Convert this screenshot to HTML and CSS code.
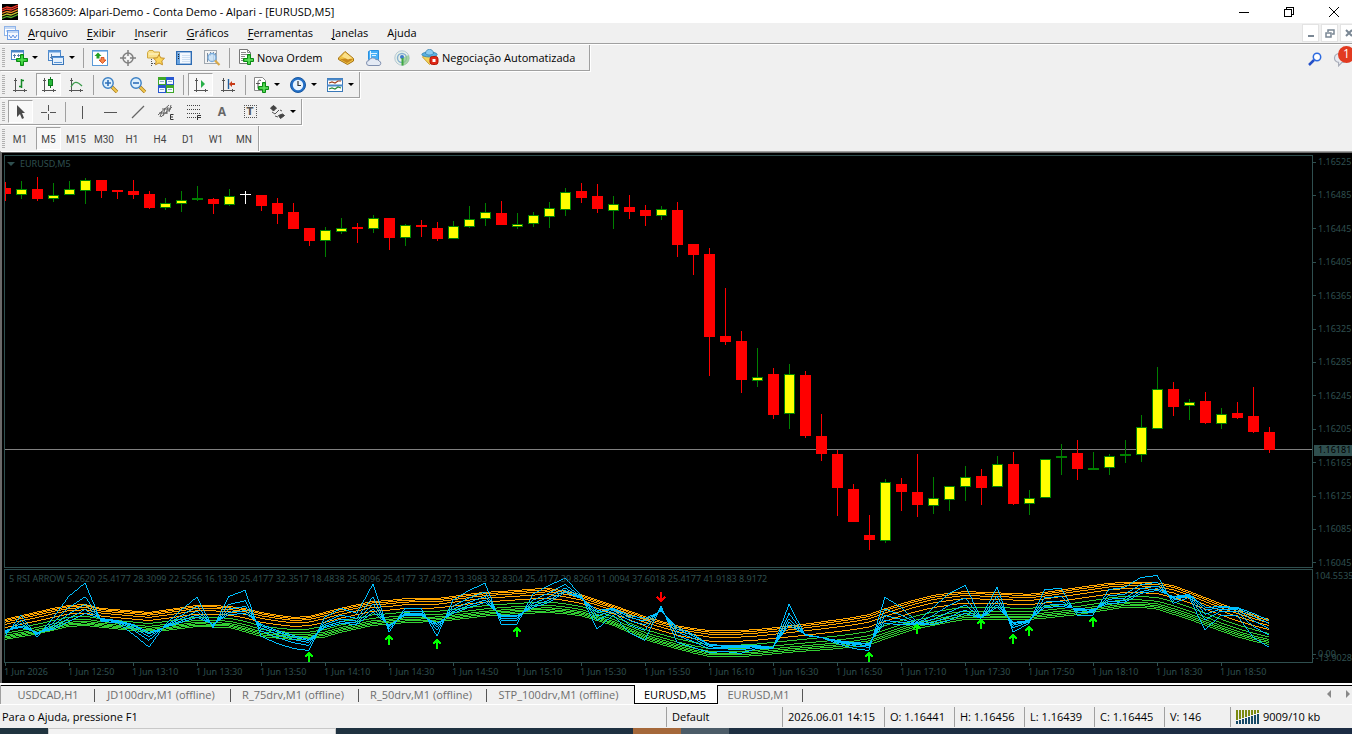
FILE: index.html
```html
<!DOCTYPE html>
<html lang="pt">
<head>
<meta charset="utf-8">
<title>16583609: Alpari-Demo - Conta Demo - Alpari - [EURUSD,M5]</title>
<link rel="stylesheet" href="styles.css">
</head>
<body>
<div class="app">
<header class="titlebar">
  <svg class="logo" viewBox="0 0 16 16"><rect width="16" height="16" fill="#000"/><g fill="none" stroke-width="1.3"><path stroke="#f03a2a" d="M0 5l5-2 4 1 7-3M0 7l5-2 4 1 7-3"/><path stroke="#f08a28" d="M0 9.500l5-2 4 1 7-3"/><path stroke="#c8c830" d="M0 12l5-2 4 1 7-3"/><path stroke="#58b030" d="M0 14.500l5-2 4 1 7-3"/></g></svg>
  <h1>16583609: Alpari-Demo - Conta Demo - Alpari - [EURUSD,M5]</h1>
  <div class="wincontrols">
    <button aria-label="Minimizar"><svg viewBox="0 0 12 12"><path d="M1 6.500h10" /></svg></button>
    <button aria-label="Restaurar"><svg viewBox="0 0 12 12"><path d="M1.500 3.500h7v7h-7zM3.500 3.500v-2h7v7h-2"/></svg></button>
    <button aria-label="Fechar"><svg viewBox="0 0 12 12"><path class="smooth" d="M1 1l10 10M11 1L1 11"/></svg></button>
  </div>
</header>
<nav class="menubar">
  <svg class="mdi-icon" viewBox="0 0 16 16"><rect x=".5" y="1.500" width="11" height="9" fill="#fff" stroke="#8fb4e8"/><path d="M1 3h10M2 6h3M7 6h3" stroke="#8fb4e8"/><rect x="3.500" y="5.500" width="11" height="9" fill="#f4f8ff" stroke="#6f9fe6"/><path d="M4 7h10" stroke="#8fb4e8"/><path d="M5 10l2 3 2-3 2 3 2-3" fill="none" stroke="#5f8fe0"/></svg>
  <button><u>A</u>rquivo</button><button><u>E</u>xibir</button><button><u>I</u>nserir</button><button><u>G</u>ráficos</button><button><u>F</u>erramentas</button><button><u>J</u>anelas</button><button>Ajuda</button>
  <div class="mdicontrols">
    <button aria-label="Minimizar gráfico"><svg viewBox="0 0 10 10"><path d="M2 8h6"/></svg></button>
    <button aria-label="Restaurar gráfico"><svg viewBox="0 0 10 10"><path d="M1 5h5v4h-5zM3 4v-2h6v4h-2" stroke-width="1.500"/></svg></button>
    <button aria-label="Fechar gráfico"><svg viewBox="0 0 10 10"><path d="M2 2l6 6M8 2L2 8"/></svg></button>
  </div>
</nav>
<section class="toolbars">
  <div class="row">
    <div class="bar">
      <i class="grip"></i>
      <button class="tool drop" aria-label="Novo gráfico"><svg viewBox="0 0 18 16"><rect x="1.500" y=".5" width="12" height="9" fill="#fff" stroke="#4a86c8"/><path d="M1 1.500h13" stroke="#4a86c8" stroke-width="2"/><path d="M4.500 4v4M3 5.500h3M8.500 4v3M7 5.500h3" stroke="#5a7ea8"/><path d="M10.500 4.500h3v4h4v3h-4v4h-3v-4h-4v-3h4z" fill="#28c028" stroke="#0a8a14"/><path d="M12 6v8M8 10h8" stroke="#5ce85c"/></svg></button>
      <button class="tool drop" aria-label="Perfis"><svg viewBox="0 0 18 16"><rect x="1.500" y=".5" width="12" height="10" fill="#eaf3fd" stroke="#4a86c8"/><path d="M1 1.500h13" stroke="#5a96d8" stroke-width="2"/><path d="M4.500 4v5M3 7.500h6" stroke="#5a7ea8"/><rect x="5.500" y="6.500" width="11" height="8" fill="#e4f0fc" stroke="#3a76b8"/><path d="M5 7.500h12M7 12.500h8" stroke="#5a96d8"/></svg></button>
      <i class="sep"></i>
      <button class="tool" aria-label="Observação do mercado"><svg viewBox="0 0 16 16"><rect x=".5" y=".5" width="15" height="15" fill="#fff" stroke="#5a9ad8"/><path d="M1 1.500h14" stroke="#9cc4f0"/><path d="M6 2.500L9.500 6H7.500v2.500h-3V6h-2z" fill="#22a022"/><path d="M10.500 13.500L7 10h2V7.500h3V10h2z" fill="#f88848" stroke="#d04010" stroke-width=".8"/></svg></button>
      <button class="tool" aria-label="Janela de dados"><svg viewBox="0 0 16 16"><circle cx="8" cy="8" r="5" fill="none" stroke="#808080" stroke-width="1.500"/><path d="M8 0v6M8 10v6M0 8h6M10 8h6" stroke="#808080" stroke-width="1.500"/><circle cx="8" cy="8" r="1" fill="#fff"/></svg></button>
      <button class="tool" aria-label="Navegador"><svg viewBox="0 0 18 16"><path d="M.5 2.500L2 .5h4l1 1.500h5.500v6h-12z" fill="#f9e08a" stroke="#d0a840"/><path d="M2 4h10" stroke="#fff6cc"/><path d="M4.500 9v7M5 13.500h3" stroke="#555" stroke-dasharray="1 1"/><path d="M12 4.500l1.700 3.300 3.800.5-2.700 2.600.7 3.900-3.500-1.800-3.500 1.800.7-3.900-2.700-2.600 3.800-.5z" fill="#fbd65a" stroke="#c8922a"/></svg></button>
      <button class="tool" aria-label="Terminal"><svg viewBox="0 0 16 16"><rect x=".7" y="1.700" width="14.600" height="12.600" fill="#f4f9ff" stroke="#2d6cb4" stroke-width="1.400"/><path d="M2.500 3v11" stroke="#6aa4e0" stroke-width="3"/><path d="M2 4.500h1M2 6.500h1M2 8.500h1" stroke="#222"/><path d="M6 5.500h8M6 7.500h8M6 9.500h8M6 11.500h8" stroke="#cfe0f2"/></svg></button>
      <button class="tool" aria-label="Testador de estratégia"><svg viewBox="0 0 16 16"><rect x=".5" y=".5" width="12" height="13" fill="#f4f4f4" stroke="#a0a8b0"/><path d="M3.500 3v9M6.500 2v4M9.500 2v9M11.500 3v6" stroke="#7c8c9c"/><circle cx="8" cy="7.500" r="4" fill="#c4e0f8" fill-opacity=".8" stroke="#7aacdc" stroke-width="1.300"/><path d="M11 10.500l4.500 4.500" stroke="#d8a848" stroke-width="2.200"/></svg></button>
      <i class="sep"></i>
      <button class="tool order"><svg viewBox="0 0 16 16"><path d="M1.500.5h8l3 3v11h-11z" fill="#fff" stroke="#777"/><path d="M9.500.5v3h3M3 3.500h5M3 5.500h7M3 7.500h4M3 9.500h3M3 11.500h3" fill="none" stroke="#888"/><path d="M9.500 5.500h3v4h3v3h-3v3h-3v-3h-4v-3h4z" fill="#30c030" stroke="#0a8a14"/><path d="M11 7v8M7 11h8" stroke="#70e870"/></svg>Nova Ordem</button>
      <button class="tool" aria-label="MetaEditor"><svg viewBox="0 0 16 16"><path d="M7 1.500l8.500 7v2.500l-6 3.500L.5 9.500V8z" fill="#f0c448" stroke="#a87414"/><path d="M1 8.500L9 13l6-3.500-5.500-1.500L4 9z" fill="#c8881c"/><path d="M7 2.500L14 8l-4 1.500-6-3z" fill="#fbe08a"/></svg></button>
      <button class="tool" aria-label="VPS"><svg viewBox="0 0 18 16"><path d="M3.500 1.500l2-1h8v9h-10z" fill="#48b0f8" stroke="#2890e0"/><path d="M6 3.500h6M7 5.500h4M5.500 1v8" stroke="#e0f4ff"/><path d="M4 15.500a2.500 2.500 0 010-5 4 4 0 017-1 3 3 0 013 1.500 2.300 2.300 0 010 4.500z" fill="#e4eaf4" stroke="#8090b0"/></svg></button>
      <button class="tool" aria-label="Sinais"><svg viewBox="0 0 16 16"><circle cx="8" cy="8" r="7.200" fill="#e8f0e8" stroke="#b4c8d4"/><circle cx="8" cy="8" r="4.500" fill="none" stroke="#88b0d0" stroke-width="1.400"/><path d="M8 8l6.500-3A7.200 7.200 0 018 15.500z" fill="#8cc888" opacity=".7"/><circle cx="8" cy="7" r="2" fill="#3d78c8"/><path d="M8.500 8v7.500" stroke="#3fa840" stroke-width="2"/></svg></button>
      <button class="tool auto"><svg viewBox="0 0 17 16"><path d="M1 8l7 7.500L15 8l-2-2H3z" fill="#f4d458" stroke="#c8a030"/><ellipse cx="8" cy="5.500" rx="7.700" ry="2.500" fill="#5ab0e0" stroke="#2878a8" stroke-width=".7"/><path d="M4 4.500c0-5.500 8-5.500 8 0-2 2-6 2-8 0z" fill="#8cccf0" stroke="#2878a8" stroke-width=".7"/><rect x="8.500" y="7.500" width="8" height="8" rx="2.500" fill="#e02818" stroke="#b01808"/><rect x="11" y="10" width="3" height="3" fill="#fff"/></svg>Negociação Automatizada</button>
    </div>
    <div class="rightside">
      <button class="icon" aria-label="Pesquisar"><svg viewBox="0 0 14 14"><circle cx="9" cy="5" r="3.700" fill="#fff" stroke="#2c6ae0" stroke-width="1.500"/><path d="M6 8l-5 5" stroke="#2450c8" stroke-width="2.500"/></svg></button>
      <button class="icon chat" aria-label="Mensagens"><svg viewBox="0 0 16 14"><path d="M5 13v-3C0 9 0 2 7 2s8 8 1 8z" fill="#e8eaf0" stroke="#a8acb8"/></svg><span class="badge">1</span></button>
    </div>
  </div>
  <div class="bar">
    <i class="grip"></i>
    <button class="tool" aria-label="Barras"><svg viewBox="0 0 16 16"><path class="ax" d="M3.500 1v14M1 13.500h14M2 3.500h3M12.500 12v3"/><path d="M9.500 2v9M7 9.500h2M10 3.500h2" stroke="#168a28" stroke-width="1.500"/></svg></button>
    <button class="tool on" aria-label="Velas"><svg viewBox="0 0 16 16"><path class="ax" d="M3.500 1v14M1 13.500h14M2 3.500h3M12.500 12v3"/><path d="M9.500 0v11" stroke="#0c7a1c"/><rect x="7.500" y="2.500" width="4" height="6" fill="#28b83c" stroke="#0c7a1c"/></svg></button>
    <button class="tool" aria-label="Linha"><svg viewBox="0 0 16 16"><path class="ax" d="M3.500 1v14M1 13.500h14M2 3.500h3M12.500 12v3"/><path d="M3 10c3-6 6-6 11-1" fill="none" stroke="#3a9a4a" stroke-width="1.300"/></svg></button>
    <i class="sep"></i>
    <button class="tool" aria-label="Ampliar"><svg viewBox="0 0 16 16"><path d="M10 10l5 5" stroke="#a87818" stroke-width="3.400"/><path d="M10 10l5 5" stroke="#f0c850" stroke-width="2"/><circle cx="6" cy="6" r="5.200" fill="#dff0fc" stroke="#3c80c4" stroke-width="1.400"/><path d="M3 6h6M6 3v6" stroke="#3070b8" stroke-width="1.600"/></svg></button>
    <button class="tool" aria-label="Reduzir"><svg viewBox="0 0 16 16"><path d="M10 10l5 5" stroke="#a87818" stroke-width="3.400"/><path d="M10 10l5 5" stroke="#f0c850" stroke-width="2"/><circle cx="6" cy="6" r="5.200" fill="#dff0fc" stroke="#3c80c4" stroke-width="1.400"/><path d="M3 6h6" stroke="#3070b8" stroke-width="1.600"/></svg></button>
    <button class="tool" aria-label="Lado a lado"><svg viewBox="0 0 16 16"><path d="M0 0h8v8H0zM8 8h8v8H8z" fill="#3fa828"/><path d="M8 0h8v8H8zM0 8h8v8H0z" fill="#2858d0"/><path d="M1 3h6v4H1zM9 3h6v4H9zM1 11h6v4H1zM9 11h6v4H9z" fill="#f4f9ff"/><path d="M2 4.500h4M10 4.500h4M2 12.500h4M10 12.500h4" stroke="#90b0c8"/></svg></button>
    <i class="sep"></i>
    <button class="tool on" aria-label="Rolagem automática"><svg viewBox="0 0 16 16"><path class="ax" d="M3.500 1v14M1 13.500h14M2 3.500h3M12.500 12v3"/><path d="M8 3l4 4-4 4z" fill="#28b048"/></svg></button>
    <button class="tool" aria-label="Deslocar gráfico"><svg viewBox="0 0 16 16"><path class="ax" d="M3.500 1v14M1 13.500h14M2 3.500h3M12.500 12v3"/><path d="M8.500 2v10" stroke="#2060a0" stroke-width="1.400"/><path d="M9 7l3-3v2h3v2h-3v2z" fill="#c83c18"/></svg></button>
    <i class="sep"></i>
    <button class="tool drop" aria-label="Indicadores"><svg viewBox="0 0 16 16"><path d="M1.500.5h8l3 3v10h-11z" fill="#fff" stroke="#888"/><path d="M8 3.500c-2-1-3 0-3 2v6M3 6.500h4" fill="none" stroke="#555"/><path d="M9.500 5.500h3v4h3v3h-3v3h-3v-3h-4v-3h4z" fill="#30c030" stroke="#0a8a14"/><path d="M11 7v8M7 11h8" stroke="#70e870"/></svg></button>
    <button class="tool drop" aria-label="Períodos"><svg viewBox="0 0 16 16"><circle cx="8" cy="8" r="7.500" fill="#2470c8" stroke="#1858a0"/><circle cx="8" cy="8" r="5.200" fill="#e8f4ff"/><path d="M8 4v4.500h3" fill="none" stroke="#333" stroke-width="1.200"/></svg></button>
    <button class="tool drop" aria-label="Modelos"><svg viewBox="0 0 16 16"><rect x=".5" y="1.500" width="15" height="13" fill="#fff" stroke="#3a78b8"/><path d="M0 2.500h16M0 8.500h16" stroke="#4a88c8" stroke-width="1.800"/><path d="M2 6l3-1 3 1 3-2h3" fill="none" stroke="#a04020" stroke-width="1.200"/><path d="M2 12l3-1 3 1 3-2 3 1" fill="none" stroke="#2a8a38" stroke-width="1.200"/></svg></button>
  </div>
  <div class="bar">
    <i class="grip"></i>
    <button class="tool on" aria-label="Cursor"><svg viewBox="0 0 16 16"><path d="M4 1l8 8H9l2 5-2 1-2-5-3 3z" fill="#4a4a4a"/></svg></button>
    <button class="tool" aria-label="Mira"><svg viewBox="0 0 16 16"><path class="ax" d="M8.500 1v6M8.500 10v6M1 8.500h6M10 8.500h6"/></svg></button>
    <i class="sep"></i>
    <button class="tool" aria-label="Linha vertical"><svg viewBox="0 0 16 16"><path class="ax" d="M8.500 2v13"/></svg></button>
    <button class="tool" aria-label="Linha horizontal"><svg viewBox="0 0 16 16"><path class="ax" d="M2 8.500h13"/></svg></button>
    <button class="tool" aria-label="Linha de tendência"><svg viewBox="0 0 16 16"><path d="M2 14L14 2" stroke="#666" stroke-width="1.300"/></svg></button>
    <button class="tool" aria-label="Canal"><svg viewBox="0 0 16 16"><path d="M0 11L11 1M3 13L14 3M4 7l-2 6M7 4l-2 8M10 3L8 10M13 1l-2 7M1 9h9M4 5h9" stroke="#666" fill="none"/><path d="M15.500 10.500h-3v5h3M13 13h2" fill="none" stroke="#333"/></svg></button>
    <button class="tool" aria-label="Fibonacci"><svg viewBox="0 0 16 16"><path d="M1 1.500h14M1 5.500h14M1 9.500h14M1 13.500h9" stroke="#444" stroke-dasharray="1 1"/><path d="M15 11.500h-3.500V16M12 13.500h3" fill="none" stroke="#333"/></svg></button>
    <button class="tool letter">A</button>
    <button class="tool boxed" aria-label="Etiqueta"><span>T</span></button>
    <button class="tool drop" aria-label="Setas"><svg viewBox="0 0 16 16"><path d="M4.500 1.500l3 2.500-3 3L1.500 4zM11.500 14.500l4-3-2-1.500-4 1.500z" fill="#444" stroke="#444"/><path d="M3 8l3 2 4-4M9 13l-3-1M11 6l2 1" stroke="#555" fill="none"/></svg></button>
  </div>
  <div class="bar last">
    <i class="grip"></i>
    <button class="tool">M1</button><button class="tool on">M5</button><button class="tool">M15</button><button class="tool">M30</button><button class="tool">H1</button><button class="tool">H4</button><button class="tool">D1</button><button class="tool">W1</button><button class="tool">MN</button>
  </div>
</section>
<main class="chart">
  <section class="panel price">
    <div class="caption symbol"><svg viewBox="0 0 8 4"><path d="M0 0h8L4 4z" fill="#2f4f4f"/></svg>EURUSD,M5</div>
    <svg id="candles" class="plot" viewBox="5 156 1307 411" preserveAspectRatio="none"></svg>
  </section>
  <div class="scale" id="prices"><span class="last-price">1.16181</span></div>
  <section class="panel">
    <div class="caption">5 RSI ARROW 5.2620 25.4177 28.3099 22.5256 16.1330 25.4177 32.3517 18.4838 25.8096 25.4177 37.4372 13.3983 32.8304 25.4177 39.8260 11.0094 37.6018 25.4177 41.9183 8.9172</div>
    <svg id="rsi" class="plot" viewBox="5 570 1307 92" preserveAspectRatio="none"></svg>
  </section>
  <div class="scale rsi-scale"><span>104.5535</span><span class="zero">0.00</span><span>-13.9028</span></div>
  <div class="times" id="times"></div>
</main>
<nav class="tabs">
  <button class="t1">USDCAD,H1</button><button class="t3">JD100drv,M1 (offline)</button><button class="t2">R_75drv,M1 (offline)</button><button class="t2">R_50drv,M1 (offline)</button><button class="t4">STP_100drv,M1 (offline)</button><button class="active">EURUSD,M5</button><button class="t0">EURUSD,M1</button>
  <div class="scroll"><button aria-label="Anterior"><svg viewBox="0 0 4 8"><path d="M4 0v8L0 4z"/></svg></button><button aria-label="Próximo"><svg viewBox="0 0 4 8"><path d="M0 0v8l4-4z"/></svg></button></div>
</nav>
<footer class="status">
  <span class="help">Para o Ajuda, pressione F1</span>
  <span class="profile">Default</span>
  <span class="date">2026.06.01 14:15</span>
  <span>O: 1.16441</span><span>H: 1.16456</span><span>L: 1.16439</span><span>C: 1.16445</span><span class="vol">V: 146</span>
  <span class="net"><svg viewBox="0 0 24 14"><path d="M1 0v10M4 0v9M7 0v8M10 0v7M13 0v6M16 0v5M19 0v4M22 0v3" stroke="#7a8a10" stroke-width="2"/><path d="M1 11v3M4 10v4M7 9v5M10 8v6M13 7v7M16 6v8M19 5v9M22 4v10" stroke="#164a68" stroke-width="2"/></svg>9009/10 kb</span>
</footer>
<div class="taskbar"><i class="search"></i><i class="task"></i><i class="task lit"></i></div>
</div>
<script src="chart.js"></script>
</body>
</html>
```
FILE: styles.css
```css
* { box-sizing: border-box; }
body { margin: 0; background: #f0f0f0; overflow: hidden; font-family: "Open Sans", "Noto Sans", sans-serif; font-size: 11px; color: #000; }
button { margin: 0; padding: 0; border: 0; background: none; font: inherit; color: inherit; white-space: nowrap; }
svg { display: block; flex: none; }
.app { display: flex; flex-direction: column; height: 100vh; }

.titlebar { display: flex; align-items: center; height: 23px; flex: none; padding-left: 2px; background: #fff; }
.logo { width: 16px; height: 16px; }
.titlebar h1 { margin: 0 auto 0 5px; font-size: 11px; font-weight: 400; line-height: 22px; }
.wincontrols { display: flex; height: 21px; margin-right: -4px; }
.wincontrols button { display: flex; width: 45px; align-items: center; justify-content: center; }
.wincontrols svg { width: 12px; height: 12px; fill: none; stroke: #000; shape-rendering: crispEdges; }
.wincontrols .smooth { shape-rendering: auto; }

.menubar { display: flex; align-items: center; height: 21px; flex: none; padding-left: 4px; border-bottom: 1px solid #a0a0a0; }
.mdi-icon { width: 16px; height: 16px; margin-right: 8px; }
.menubar > button { margin-right: 19px; line-height: 20px; }
.menubar u { text-underline-offset: 2px; }
.mdicontrols { display: flex; gap: 2px; margin: 0 -5px 0 auto; }
.menubar .mdicontrols button { display: flex; width: 17px; height: 18px; border: 1px solid #e3e3e3; background: #fff; align-items: center; justify-content: center; }
.mdicontrols svg { width: 10px; height: 10px; fill: none; stroke: #7a8794; stroke-width: 2; }

.toolbars { flex: none; border-top: 1px solid #fff; border-bottom: 1px solid #a0a0a0; }
.row { display: flex; justify-content: space-between; }
.bar { display: flex; width: fit-content; height: 26px; margin-bottom: 1px; border-right: 1px solid #a0a0a0; border-bottom: 1px solid #a0a0a0; box-shadow: 1px 1px 0 #fff; align-items: center; }
.bar.last { height: 25px; margin-bottom: 0; border-bottom: 0; }
.bar.last .tool { padding-top: 1px; font-family: Roboto, sans-serif; font-size: 10px; color: #444; }
.grip { width: 3px; height: 20px; margin: 0 1px 0 2px; background: repeating-linear-gradient(#b0b0b0 0 1px, #f0f0f0 1px 2px); }
.sep { width: 1px; height: 20px; margin: 0 2px 0 3px; background: #a0a0a0; }
.tool { display: flex; width: 28px; height: 22px; flex: none; align-items: center; justify-content: center; }
.tool svg { width: 18px; height: 16px; }
.tool.on { width: 25px; height: 23px; margin: 0 1px 0 2px; border: 1px solid; border-color: #a0a0a0 #fff #fff #a0a0a0; background: #f8f8f8; }
.tool.drop { width: 37px; justify-content: flex-start; padding-left: 4px; }
.tool.drop::after { content: ""; margin-left: 4px; border: 3px solid transparent; border-top-color: #000; border-bottom: 0; }
.tool.order { width: 100px; justify-content: flex-start; padding: 0 0 1px 5px; gap: 2px; }
.tool.auto { width: 173px; justify-content: flex-start; padding: 0 0 1px 5px; gap: 3px; }
.ax { fill: none; stroke: #555; }
.tool.letter { font-size: 12px; font-weight: 700; color: #666; }
.tool.boxed span { width: 13px; height: 13px; border: 1px dotted #555; font: 700 10px/11px "DejaVu Sans", sans-serif; color: #555; }
.rightside { display: flex; align-items: center; gap: 9px; margin-right: -1px; }
.icon svg { width: 14px; height: 14px; }
.chat { position: relative; }
.chat svg { width: 22px; height: 16px; }
.badge { position: absolute; top: -5px; left: 7px; width: 17px; height: 17px; border-radius: 50%; background: #e23a20; color: #fff; font-size: 12px; line-height: 16px; }

.chart { display: grid; grid-template: minmax(0, 1fr) 94px 19px / minmax(0, 1fr) 39px; row-gap: 1px; flex: 1; min-height: 0; padding: 2px 0 0 2px; border: solid #696969; border-width: 1px 0 0 2px; background: #000; color: #2f4f4f; font-family: "Noto Sans", sans-serif; font-size: 9px; line-height: 12px; white-space: nowrap; }
.panel { position: relative; display: flex; min-height: 0; border: 1px solid #2f4f4f; }
.plot { width: 100%; height: 100%; shape-rendering: crispEdges; }
.caption { position: absolute; top: 3px; left: 4px; display: flex; align-items: center; gap: 5px; }
.symbol { top: 2px; left: 2px; }
.symbol svg { width: 8px; height: 4px; }
.scale { position: relative; display: flex; flex-direction: column; justify-content: space-between; overflow: hidden; padding-top: 1px; margin-bottom: -1px; }
.scale span { display: flex; align-items: center; height: 12px; }
.scale span::before { content: ""; width: 3px; height: 1px; margin-right: 2px; background: #2f4f4f; }
.scale .last-price { position: absolute; top: calc(71.4% - 6px); left: 1px; right: 0; height: 11px; padding-left: 4px; background: #2f4f4f; color: #000; }
.scale .last-price::before { display: none; }
.rsi-scale .zero { margin: auto 0 -8px; }
.times { display: flex; grid-column: 1 / -1; margin-top: -1px; overflow: hidden; }
.times span { flex: 0 0 64px; padding-top: 3px; background: linear-gradient(#2f4f4f, #2f4f4f) 1px 0 / 1px 3px no-repeat; }

.tabs { display: flex; height: 22px; flex: none; border-bottom: 1px solid #fff; color: #6d6d6d; background: linear-gradient(#fff 2px, #000 2px 3px, #f0f0f0 3px); padding: 2px 0 1px; }
.tabs > button { position: relative; height: 19px; padding-right: 4px; line-height: 19px; }
.tabs > button:not(.active)::after { content: ""; position: absolute; right: 0; top: 4px; width: 1px; height: 13px; background: #555; }
.tabs .t4::after { visibility: hidden; }
.tabs .t1 { width: 95px; padding: 0; border-left: 1px solid #a0a0a0; }
.t3 { width: 136px; }
.t2 { width: 128px; }
.t4 { width: 147px; }
.t0 { width: 85px; }
.tabs .active { width: 84px; padding-right: 2px; border: 1px solid #000; border-top: 0; background: #fff; color: #000; }
.scroll { display: flex; margin: 0 2px 0 auto; gap: 15px; align-items: center; }
.scroll svg { width: 4px; height: 8px; fill: #888; }

.status { display: flex; height: 23px; flex: none; align-items: center; line-height: 20px; padding-top: 1px; }
.status span { width: 70px; padding-left: 5px; border-left: 1px solid #a0a0a0; white-space: nowrap; }
.status .help { flex: 1; padding-left: 2px; border: 0; }
.status .profile { width: 116px; }
.status .date { width: 102px; }
.status .vol { width: 66px; }
.status .net { display: flex; width: 122px; gap: 3px; align-items: center; }
.net svg { width: 24px; height: 14px; }

.taskbar { display: flex; height: 6px; flex: none; background: linear-gradient(90deg, #20343f, #1c2c44); }
.search { width: 288px; margin: 0 297px 0 48px; background: #f2f2f2; border: 1px solid #c8c8c8; border-bottom: 0; }
.task { width: 48px; background: #a5683a; }
.task.lit { background: #4c5c68; }
```
FILE: chart.js
```js
// Each candle: high, body top, body bottom, low, kind (r = down, g = up, d = doji)
const candles = `182 188 194 201 r|181 189 195 199 g|177 189 199 201 r|183 195 199 202 g|181 189 195 195 g|178 180 191 204 g|180 180 191 198 r|190 190 192 199 r|180 191 195 199 r|191 194 208 209 r|198 203 208 210 g|191 200 204 212 g|186 198 200 201 g|198 199 204 214 r|189 196 205 206 g|191 194 195 204 d|195 195 206 211 r|198 203 214 224 r|203 212 229 229 r|228 228 241 246 r|227 230 241 257 g|218 228 232 234 g|223 227 229 243 r|215 218 229 233 g|218 218 238 250 r|224 225 238 246 g|220 225 227 237 r|222 228 239 241 r|221 226 239 239 g|206 219 227 228 g|203 212 219 226 g|201 213 225 225 r|213 224 227 229 g|212 215 224 227 g|202 208 217 228 g|188 192 210 216 g|183 191 198 203 r|184 196 209 213 r|196 204 211 229 g|195 207 212 219 r|205 210 216 226 r|206 209 216 220 g|202 210 245 257 r|244 244 255 275 r|248 254 337 376 r|288 336 342 345 r|331 341 380 393 r|348 377 381 387 g|368 374 415 419 r|364 374 414 429 g|371 375 436 438 r|414 436 454 461 r|450 454 488 516 r|484 489 522 522 r|515 535 540 550 r|479 482 541 543 g|478 484 492 511 r|454 492 505 517 r|477 498 506 514 g|486 486 500 511 g|466 477 487 501 g|469 476 488 505 r|456 464 487 487 g|452 464 504 505 r|490 498 504 515 g|459 459 498 498 g|444 456 458 475 g|440 453 469 480 r|452 468 470 470 g|454 456 468 475 g|440 454 456 463 g|415 427 455 462 g|367 389 429 429 g|382 389 407 416 r|399 402 406 420 g|392 401 423 424 r|408 414 424 429 g|402 413 418 419 r|387 416 432 433 r|427 432 450 453 r`
  .split("|").map(s => s.split(" "));
const colors = { r: "#f00", g: "#008000", d: "#fff" };
const rect = (x, y, w, h, fill) => `<rect x="${x}" y="${y}" width="${w}" height="${h}" fill="${fill}"/>`;

let out = rect(5, 449, 1307, 1, "#808080");
candles.forEach(([hi, top, bottom, lo, kind], i) => {
  const x = 5 + 16 * i;
  out += rect(x, hi, 1, lo - hi, colors[kind]) + rect(x - 5, top, 11, bottom - top, colors[kind]);
  if (kind === "g" && bottom - top > 2) out += rect(x - 4, +top + 1, 9, bottom - top - 2, "#ff0");
});
document.getElementById("candles").innerHTML = out;

// Envelope edges as x,y pairs
const upper = [[5,619],[53,608],[69,605],[85,604],[101,608],[150,612],[170,609],[197,605],[220,605],[245,608],[261,612],[290,617],[310,616],[340,608],[373,601],[390,600],[407,598],[440,598],[467,594],[483,592],[517,590],[540,588],[553,588],[580,594],[613,605],[647,617],[679,626],[707,630],[747,630],[787,626],[803,624],[840,619],[867,615],[883,609],[913,600],[933,595],[963,591],[1013,593],[1032,594],[1045,592],[1079,587],[1115,582],[1155,582],[1172,585],[1192,592],[1219,603],[1245,612],[1269,619]];
const lower = [[5,639],[40,633],[69,626],[85,625],[150,632],[197,626],[230,627],[261,636],[290,639],[320,638],[340,632],[373,625],[407,622],[440,621],[490,615],[517,613],[553,612],[580,615],[613,625],[647,640],[679,649],[707,656],[747,656],[787,652],[840,648],[867,645],[893,636],[913,629],[963,619],[1032,619],[1079,614],[1129,606],[1155,608],[1192,620],[1219,630],[1245,639],[1269,644]];
const fast = [636,615,637,618,596,583,621,622,634,647,625,610,597,628,596,590,636,643,648,650,617,608,613,584,632,608,608,636,600,590,583,624,624,594,585,578,595,629,615,632,640,606,642,647,652,651,653,648,648,604,635,637,643,648,650,597,607,622,608,593,585,618,587,632,623,589,588,615,615,589,587,577,575,603,597,630,615,615,637,647];
const slow = [630,627,632,629,621,613,618,620,624,632,627,622,617,624,614,613,624,630,635,639,627,623,624,612,625,615,615,623,613,607,602,615,615,607,602,592,598,610,608,615,618,611,627,634,644,645,645,645,647,625,634,637,640,642,643,623,624,624,624,620,613,618,607,622,620,607,606,608,609,603,602,593,590,596,594,607,606,607,613,620];

const at = (pts, x) => {
  let i = 1;
  while (i < pts.length - 1 && pts[i][0] < x) i++;
  const [a, b] = [pts[i - 1], pts[i]];
  return a[1] + (b[1] - a[1]) * (x - a[0]) / (b[0] - a[0]);
};
// One-pixel stepped line, drawn column by column
const line = (f, color) => {
  let d = "";
  for (let i = 0; i < 79; i++) {
    const y0 = f(i, 5 + 16 * i), y1 = f(i + 1, 21 + 16 * i);
    for (let s = 0; s < 16; s++) {
      const a = Math.round(y0 + (y1 - y0) * s / 16), b = Math.round(y0 + (y1 - y0) * (s + 1) / 16);
      d += `M${5 + 16 * i + s} ${Math.min(a, b)}h1v${Math.max(1, Math.abs(b - a))}h-1z`;
    }
  }
  return `<path d="${d}" fill="${color}"/>`;
};
out = "";
const band = (k, c) => line((i, x) => { const u = at(upper, x); return u + (at(lower, x) - u) * k; }, c);
[0, 0.06, 0.14, 0.25, 0.41].forEach(k => out += band(k, "#ffa500"));
[0.56, 0.7, 0.8, 0.87, 0.93, 1].forEach(k => out += band(k, "#32cd32"));
[0, 0.45, 0.7, 0.88, 1].forEach(k => out += line(i => fast[i] + (slow[i] - fast[i]) * k, "#00bfff"));
const arrow = (x, y, color, dir) => `<path transform="translate(${x} ${y}) scale(1 ${dir})" d="M0 5V-3M-4 0L0-4L4 0" fill="none" stroke="${color}" stroke-width="2"/>`;
[[309,657],[389,640],[437,644],[517,632],[869,657],[917,629],[981,624],[1013,639],[1029,631],[1093,622]].forEach(([x, y]) => out += arrow(x, y, "#0f0", 1));
out += arrow(661, 597, "#f00", -1);
document.getElementById("rsi").innerHTML = out;

const addLabel = (parent, text) => {
  const s = document.createElement("span");
  s.textContent = text;
  parent.append(s);
};
const prices = document.getElementById("prices");
for (let p = 116525; p >= 116045; p -= 40) addLabel(prices, (p / 100000).toFixed(5));
const times = document.getElementById("times");
addLabel(times, "1 Jun 2026");
for (let m = 770; m <= 1130; m += 20) addLabel(times, `1 Jun ${Math.floor(m / 60)}:${String(m % 60).padStart(2, "0")}`);
```
